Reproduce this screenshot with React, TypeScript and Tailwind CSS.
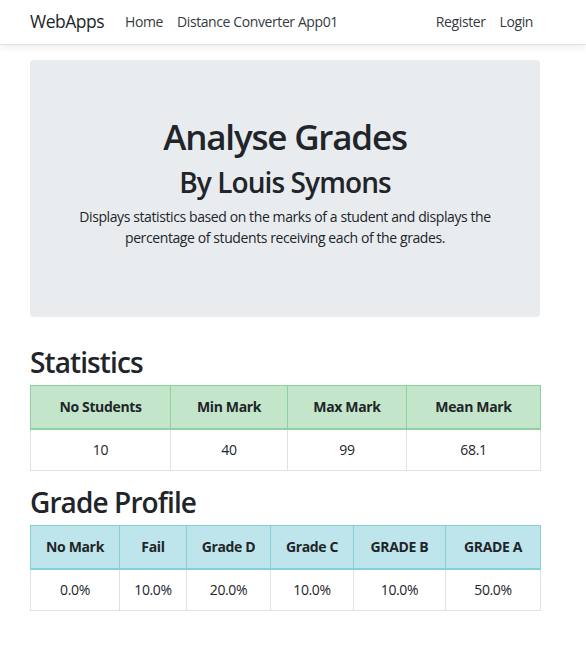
import React from "react";

const font = { fontFamily: '"Open Sans", "Noto Sans", sans-serif' };

function StatTable() {
  const heads = ["No Students", "Min Mark", "Max Mark", "Mean Mark"];
  const vals = ["10", "40", "99", "68.1"];
  const widths = ["w-[140px]", "w-[117px]", "w-[119px]", "w-[134px]"];
  return (
    <table className="w-[510px] border-collapse table-fixed text-[14px] text-[#212529] tracking-[-0.35px]">
      <thead>
        <tr className="bg-[#c3e6cb]">
          {heads.map((h, i) => (
            <th
              key={h}
              className={`${widths[i]} border border-[#8fd19e] border-b-2 h-[43px] px-0 text-center font-bold`}
            >
              {h}
            </th>
          ))}
        </tr>
      </thead>
      <tbody>
        <tr>
          {vals.map((v, i) => (
            <td key={i} className="border border-[#dee2e6] h-[42px] text-center">
              {v}
            </td>
          ))}
        </tr>
      </tbody>
    </table>
  );
}

function GradeTable() {
  const heads = ["No Mark", "Fail", "Grade D", "Grade C", "GRADE B", "GRADE A"];
  const vals = ["0.0%", "10.0%", "20.0%", "10.0%", "10.0%", "50.0%"];
  const widths = ["w-[89px]", "w-[67px]", "w-[84px]", "w-[83px]", "w-[92px]", "w-[95px]"];
  return (
    <table className="w-[510px] border-collapse table-fixed text-[14px] text-[#212529] tracking-[-0.35px]">
      <thead>
        <tr className="bg-[#bee5eb]">
          {heads.map((h, i) => (
            <th
              key={h}
              className={`${widths[i]} border border-[#86cfda] border-b-2 h-[43px] px-0 text-center font-bold`}
            >
              {h}
            </th>
          ))}
        </tr>
      </thead>
      <tbody>
        <tr>
          {vals.map((v, i) => (
            <td key={i} className="border border-[#dee2e6] h-[42px] text-center">
              {v}
            </td>
          ))}
        </tr>
      </tbody>
    </table>
  );
}

export default function App() {
  return (
    <div className="min-h-[666px] bg-white text-[#212529]" style={font}>
      <nav className="h-[45px] border-b border-[#dee2e6] shadow-[0_4px_6px_rgba(0,0,0,0.05)] bg-white">
        <div className="ml-[30px] w-[510px] h-full flex items-center pb-[2px] tracking-[-0.4px]">
          <span className="text-[17.5px] text-[#212529] mr-[14px] tracking-[-0.5px]">WebApps</span>
          <span className="text-[14px] text-[#343a40] px-[7px]">Home</span>
          <span className="text-[14px] text-[#343a40] px-[7px]">Distance Converter App01</span>
          <div className="flex-1" />
          <span className="text-[14px] text-[#343a40] px-[7px]">Register</span>
          <span className="text-[14px] text-[#343a40] px-[7px]">Login</span>
        </div>
      </nav>
      <main className="ml-[30px] w-[510px] pt-[15px]">
        <section className="bg-[#e9ecef] rounded-[4px] h-[257px] px-[28px] pt-[56px] text-center">
          <h1 className="text-[35px] leading-[42px] font-semibold mb-[7px] tracking-[-1.2px]">Analyse Grades</h1>
          <h2 className="text-[28px] leading-[34px] font-semibold mb-[7px] tracking-[-0.9px]">By Louis Symons</h2>
          <p className="text-[14px] leading-[21px] tracking-[-0.4px]">
            Displays statistics based on the marks of a student and displays the percentage of
            students receiving each of the grades.
          </p>
        </section>
        <h2 className="text-[28px] leading-[34px] font-semibold mt-[28px] mb-[6px] tracking-[-0.9px]">Statistics</h2>
        <StatTable />
        <h2 className="text-[28px] leading-[34px] font-semibold mt-[14px] mb-[6px] tracking-[-0.9px]">Grade Profile</h2>
        <GradeTable />
      </main>
    </div>
  );
}
